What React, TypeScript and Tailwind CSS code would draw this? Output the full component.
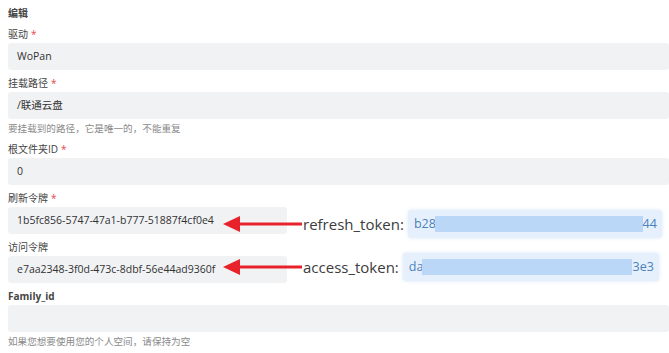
import React from "react";

const FONT = "font-['Open_Sans','Noto_Sans_CJK_SC',sans-serif]";

function Label({ text, required, bold, className = "" }: { text: string; required?: boolean; bold?: boolean; className?: string }) {
  return (
    <div className={`h-[18px] leading-[18px] text-[10px] text-[#444] ${bold ? "font-bold text-[#333]" : ""} ${className}`}>
      {text}
      {required && <span className="ml-[3px] text-[#e5484d]">*</span>}
    </div>
  );
}

function Input({ value, className = "" }: { value?: string; className?: string }) {
  return (
    <div className={`h-[27px] rounded-[3px] bg-[#f1f2f4] pl-[9px] flex items-center text-[10.5px] text-[#333] ${className}`}>
      {value}
    </div>
  );
}

function Helper({ text, className = "" }: { text: string; className?: string }) {
  return <div className={`h-[16px] leading-[16px] text-[9.6px] text-[#8a8a8a] ${className}`}>{text}</div>;
}

function Arrow() {
  return (
    <svg width="80" height="18" viewBox="0 0 80 18" className="shrink-0">
      <polygon points="1,9 18,1 18,17" fill="#e8222b" />
      <rect x="16" y="7.5" width="64" height="3" fill="#e8222b" />
    </svg>
  );
}

function TokenBox({ head, tail, width, headW }: { head: string; tail: string; width: number; headW: string }) {
  return (
    <div
      className="h-[28px] rounded-[3px] bg-[#e6f0fc] shadow-[0_0_4px_#dce9f9] flex items-center pl-[6px] pr-[5px] text-[12.5px] text-[#4a82bb]"
      style={{ width }}
    >
      <span className={headW}>{head}</span>
      <span className="flex-1 h-[16px] bg-[#bad7f7]" />
      <span>{tail}</span>
    </div>
  );
}

function TokenRow({
  value,
  label,
  head,
  tail,
  boxW,
  shift,
  headW,
}: {
  value: string;
  label: string;
  head: string;
  tail: string;
  boxW: number;
  shift: string;
  headW: string;
}) {
  return (
    <div className="relative">
      <Input value={value} className="w-[279px]" />
      {/* pasted annotation over the form */}
      <div className={`absolute left-[214px] flex items-center ${shift}`}>
        <Arrow />
        <span className="ml-[1px] mr-[4px] text-[15px] text-[#3c3c3c] font-['Open_Sans',sans-serif]">{label}</span>
        <TokenBox head={head} tail={tail} width={boxW} headW={headW} />
      </div>
    </div>
  );
}

export default function App() {
  return (
    <div className={`w-[669px] h-[353px] bg-white overflow-hidden pl-[8px] pt-[4px] ${FONT}`}>
      <Label text="编辑" bold />
      <Label text="驱动" required className="mt-[3px]" />
      <Input value="WoPan" />

      <Label text="挂载路径" required className="mt-[4px]" />
      <Input value="/联通云盘" className="h-[26px]" />
      <Helper text="要挂载到的路径，它是唯一的，不能重复" className="mt-[2px]" />

      <Label text="根文件夹ID" required className="mt-[3px]" />
      <Input value="0" className="h-[26px]" />

      <Label text="刷新令牌" required className="mt-[4px]" />
      <TokenRow
        value="1b5fc856-5747-47a1-b777-51887f4cf0e4"
        label="refresh_token:"
        head="b28"
        tail="44"
        boxW={254}
        shift="top-[3px]"
        headW="w-[21px]"
      />

      <Label text="访问令牌" className="mt-[4px]" />
      <TokenRow
        value="e7aa2348-3f0d-473c-8dbf-56e44ad9360f"
        label="access_token:"
        head="da"
        tail="3e3"
        boxW={256}
        shift="-top-[3px]"
        headW="w-[13px]"
      />

      <Label text="Family_id" bold className="mt-[4px]" />
      <Input />
      <Helper text="如果您想要使用您的个人空间，请保持为空" className="mt-[2px]" />
    </div>
  );
}
